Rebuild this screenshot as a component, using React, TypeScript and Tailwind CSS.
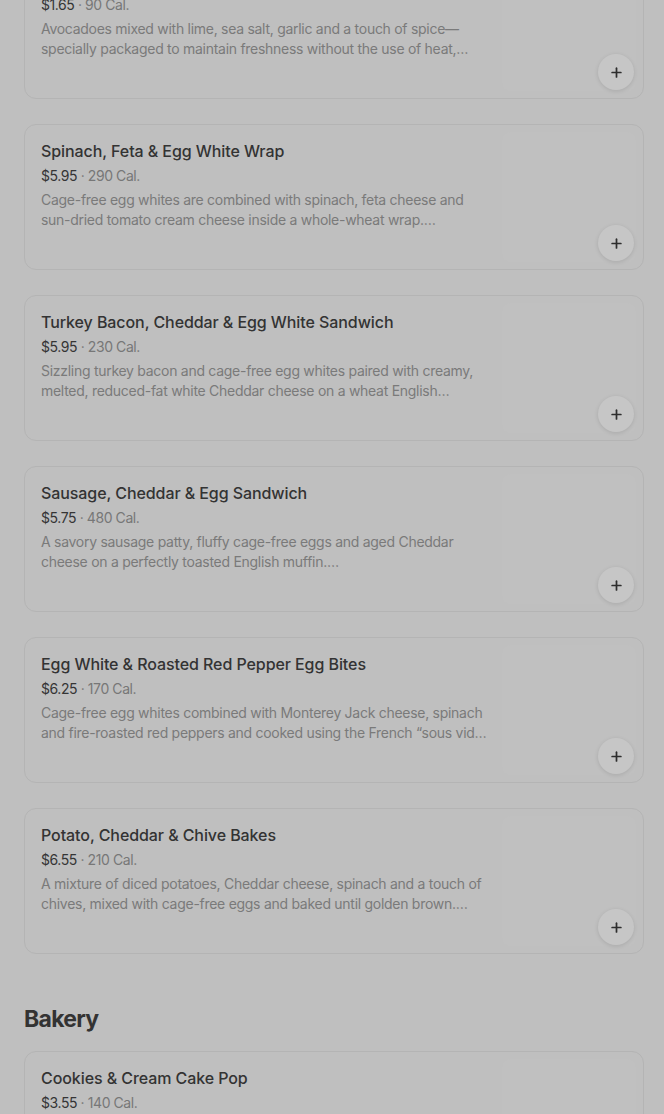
import { Plus } from "lucide-react";

type Item = {
  name: string;
  price: string;
  cal: string;
  lines: string[];
};

const breakfast: Item[] = [
  {
    name: "Avocado Spread",
    price: "$1.65",
    cal: "90 Cal.",
    lines: [
      "Avocadoes mixed with lime, sea salt, garlic and a touch of spice—",
      "specially packaged to maintain freshness without the use of heat,…",
    ],
  },
  {
    name: "Spinach, Feta & Egg White Wrap",
    price: "$5.95",
    cal: "290 Cal.",
    lines: [
      "Cage-free egg whites are combined with spinach, feta cheese and",
      "sun-dried tomato cream cheese inside a whole-wheat wrap.…",
    ],
  },
  {
    name: "Turkey Bacon, Cheddar & Egg White Sandwich",
    price: "$5.95",
    cal: "230 Cal.",
    lines: [
      "Sizzling turkey bacon and cage-free egg whites paired with creamy,",
      "melted, reduced-fat white Cheddar cheese on a wheat English…",
    ],
  },
  {
    name: "Sausage, Cheddar & Egg Sandwich",
    price: "$5.75",
    cal: "480 Cal.",
    lines: [
      "A savory sausage patty, fluffy cage-free eggs and aged Cheddar",
      "cheese on a perfectly toasted English muffin.…",
    ],
  },
  {
    name: "Egg White & Roasted Red Pepper Egg Bites",
    price: "$6.25",
    cal: "170 Cal.",
    lines: [
      "Cage-free egg whites combined with Monterey Jack cheese, spinach",
      "and fire-roasted red peppers and cooked using the French “sous vid…",
    ],
  },
  {
    name: "Potato, Cheddar & Chive Bakes",
    price: "$6.55",
    cal: "210 Cal.",
    lines: [
      "A mixture of diced potatoes, Cheddar cheese, spinach and a touch of",
      "chives, mixed with cage-free eggs and baked until golden brown.…",
    ],
  },
];

const bakery: Item[] = [
  {
    name: "Cookies & Cream Cake Pop",
    price: "$3.55",
    cal: "140 Cal.",
    lines: [
      "Vanilla cake mixed with chocolate cookie pieces and creamy icing,",
      "dipped in a white chocolaty coating and topped with cookie crumbs.…",
    ],
  },
];

function MenuCard({ item }: { item: Item }) {
  return (
    <div className="flex h-[146px] rounded-xl border border-[#b4b4b4] bg-[#bfbfbf]">
      <div className="w-[462px] shrink-0 pl-4 pt-[14px]">
        <h3 className="text-[16px] leading-6 font-medium tracking-[-0.005em] text-[#333333] whitespace-nowrap">
          {item.name}
        </h3>
        <p className="mt-[3px] text-[14px] leading-5 tracking-[-0.03em] text-[#777777]">
          <span className="text-[#353535]">{item.price}</span> · {item.cal}
        </p>
        <p className="mt-1 text-[14px] leading-5 tracking-[-0.02em] text-[#7a7a7a]">
          {item.lines.map((l) => (
            <span key={l} className="block whitespace-nowrap">
              {l}
            </span>
          ))}
        </p>
      </div>
      <div className="relative ml-auto mr-[7px] my-[7px] w-[134px] rounded-lg bg-[#c0c0c0]">
        <button className="absolute right-[2px] bottom-[1px] flex h-9 w-9 items-center justify-center rounded-full bg-[#c6c6c6] shadow-[0_1px_4px_rgba(0,0,0,0.12)]">
          <Plus size={15} strokeWidth={2.75} className="text-[#2e2e2e]" />
        </button>
      </div>
    </div>
  );
}

export default function App() {
  return (
    <div
      className="min-h-screen overflow-hidden bg-[#bfbfbf] pl-6 pr-5"
      style={{ fontFamily: "Inter, 'Noto Sans', sans-serif" }}
    >
      <div className="-mt-[47px] flex flex-col gap-[25px]">
        {breakfast.map((item) => (
          <MenuCard key={item.name} item={item} />
        ))}
      </div>

      <h2 className="mt-[49px] mb-[16px] text-[23px] leading-8 font-bold tracking-[-0.03em] text-[#333333]">
        Bakery
      </h2>

      <div className="flex flex-col gap-[25px]">
        {bakery.map((item) => (
          <MenuCard key={item.name} item={item} />
        ))}
      </div>
    </div>
  );
}
